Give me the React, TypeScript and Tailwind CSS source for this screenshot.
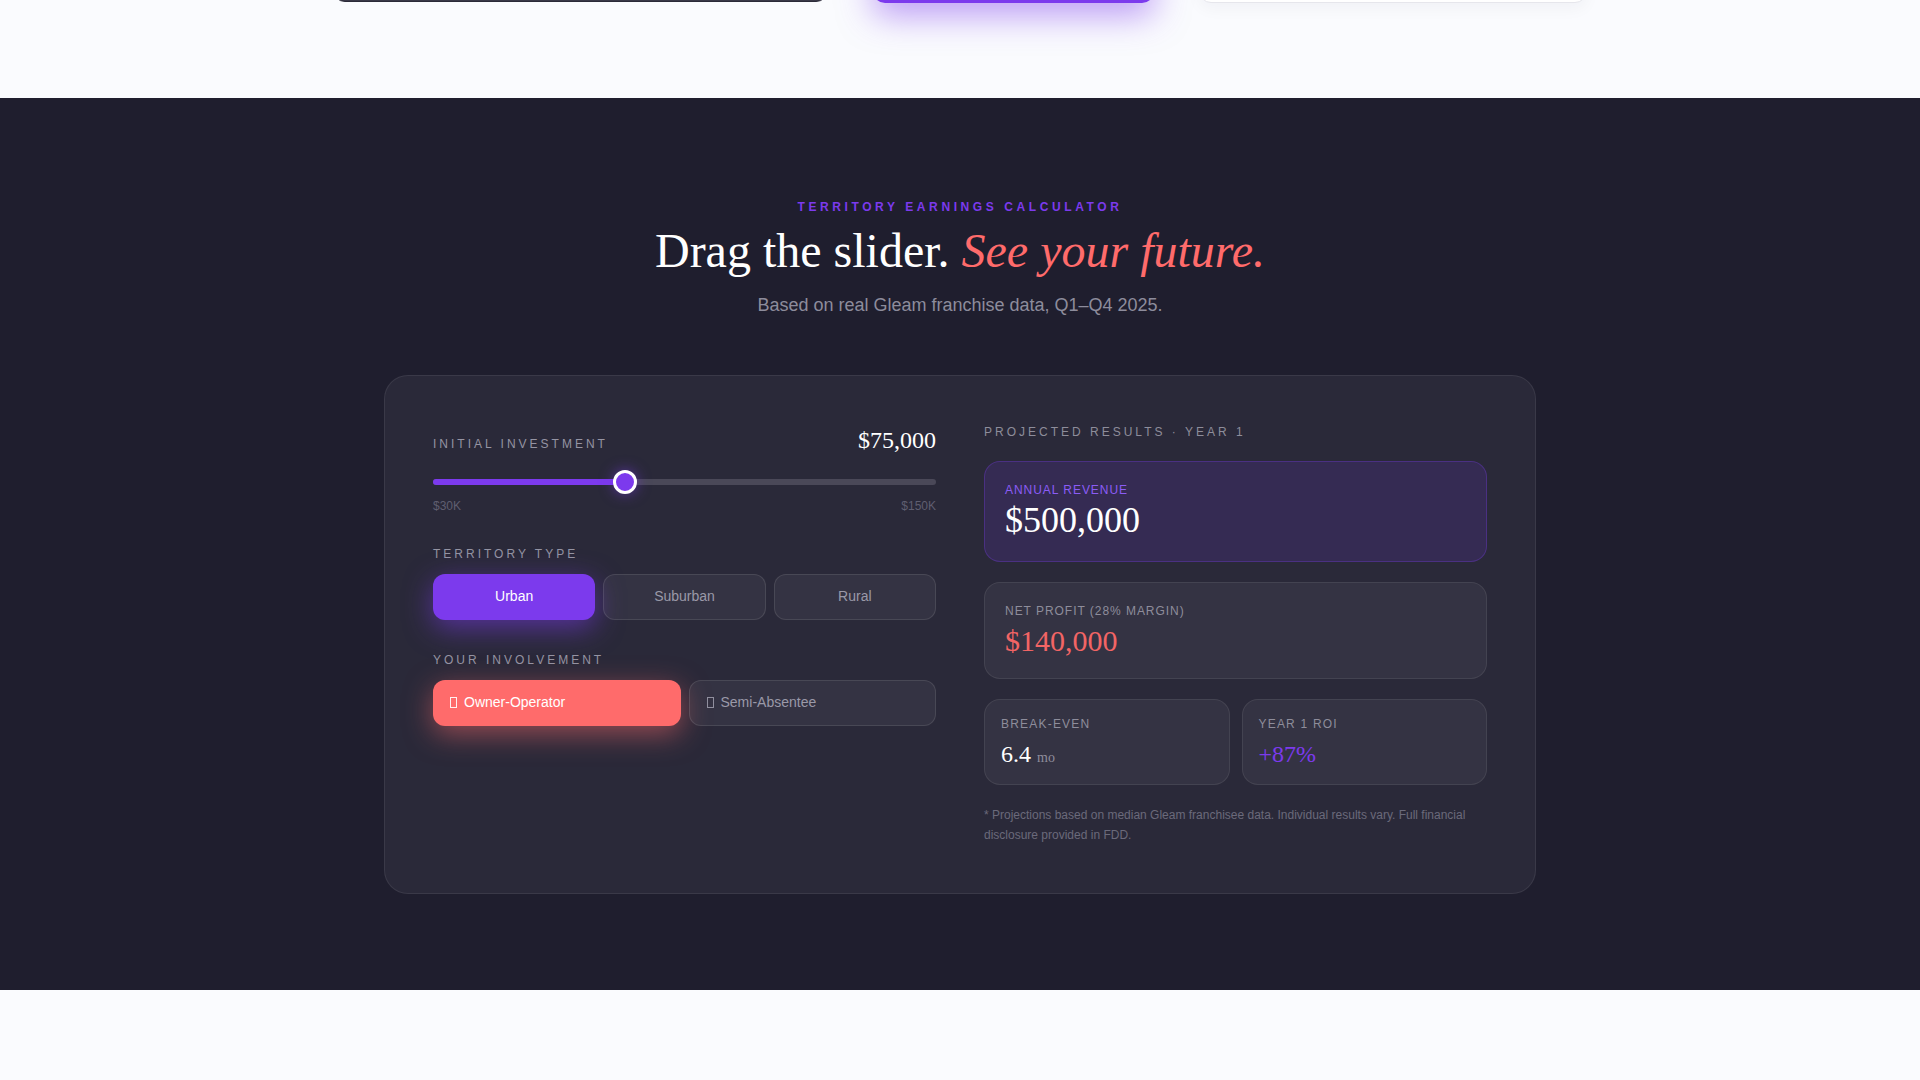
import { useState } from "react"

const territories = ["Urban", "Suburban", "Rural"]
const involvements = ["Owner-Operator", "Semi-Absentee"]

function Tofu() {
  return <span className="inline-block w-[7px] h-[11px] border border-current ml-[1px] mr-[7px] align-[-1px] opacity-90" />
}

export default function App() {
  const [investment] = useState(75000)
  const [territory, setTerritory] = useState("Urban")
  const [involvement, setInvolvement] = useState("Owner-Operator")

  const pct = ((investment - 30000) / (150000 - 30000)) * 100
  const thumbLeft = `calc(${pct}% - ${pct * 0.24}px)`
  const fillWidth = `calc(${pct}% - ${pct * 0.24}px + 12px)`

  return (
    <div className="min-h-screen bg-[#fafbfe] font-['Liberation_Sans',Arial,sans-serif]">
      {/* Tail of the previous section */}
      <section className="h-[98px] overflow-hidden">
        <div className="flex justify-center gap-[45px] -mt-[40px]">
          <div className="w-[495px] h-[42px] rounded-xl bg-[#3a3948] border border-[#2b2a38]" />
          <div className="w-[281px] h-[43px] rounded-xl bg-[#7c3aed] shadow-[0_12px_34px_rgba(124,58,237,0.5)]" />
          <div className="w-[388px] h-[43px] rounded-xl bg-white border border-[#e6e6ec] shadow-[0_6px_16px_rgba(20,20,40,0.04)]" />
        </div>
      </section>

      {/* Calculator */}
      <section className="bg-[#1f1e2e] pt-[101px] pb-24">
        <div className="text-center">
          <p className="text-[12px] leading-4 font-bold tracking-[0.3em] text-[#7c3aed]">
            TERRITORY EARNINGS CALCULATOR
          </p>
          <h2 className="mt-[10px] text-[48px] leading-[1.1] text-white font-['Liberation_Serif',Georgia,serif]">
            Drag the slider. <em className="text-[#ff6b6b]">See your future.</em>
          </h2>
          <p className="mt-[13px] text-[18px] leading-7 text-[#8d8c9c]">
            Based on real Gleam franchise data, Q1–Q4 2025.
          </p>
        </div>

        <div className="mt-14 mx-auto w-[1152px] rounded-[24px] bg-[#2a2939] border border-white/[0.08] p-12 grid grid-cols-2 gap-12">
          {/* Inputs */}
          <div>
            <div className="flex items-baseline justify-between">
              <span className="text-[12px] leading-4 tracking-[0.25em] text-[#9594a3]">INITIAL INVESTMENT</span>
              <span className="text-[24px] leading-8 text-white font-['Liberation_Serif',Georgia,serif]">
                ${investment.toLocaleString("en-US")}
              </span>
            </div>

            <div className="relative mt-[14px] h-6">
              <div className="absolute inset-x-0 top-[9px] h-1.5 rounded-full bg-[#4a4858]" />
              <div className="absolute left-0 top-[9px] h-1.5 rounded-full bg-[#7c3aed]" style={{ width: fillWidth }} />
              <div
                className="absolute top-0 w-6 h-6 rounded-full bg-[#7c3aed] border-[3px] border-white shadow-[0_0_14px_rgba(124,58,237,0.55)]"
                style={{ left: thumbLeft }}
              />
            </div>
            <div className="mt-1 flex justify-between text-[12px] leading-4 text-[#5f5e70]">
              <span>$30K</span>
              <span>$150K</span>
            </div>

            <p className="mt-8 text-[12px] leading-4 tracking-[0.25em] text-[#9594a3]">TERRITORY TYPE</p>
            <div className="mt-3 grid grid-cols-3 gap-2">
              {territories.map((t) => (
                <button
                  key={t}
                  onClick={() => setTerritory(t)}
                  className={
                    t === territory
                      ? "h-[46px] rounded-xl bg-[#7c3aed] text-white text-[14px] shadow-[0_8px_28px_rgba(124,58,237,0.55)]"
                      : "h-[46px] rounded-xl bg-white/[0.05] border border-white/10 text-[#9a99a8] text-[14px]"
                  }
                >
                  {t}
                </button>
              ))}
            </div>

            <p className="mt-8 text-[12px] leading-4 tracking-[0.25em] text-[#9594a3]">YOUR INVOLVEMENT</p>
            <div className="mt-3 grid grid-cols-2 gap-2">
              {involvements.map((v) => (
                <button
                  key={v}
                  onClick={() => setInvolvement(v)}
                  className={
                    v === involvement
                      ? "h-[46px] rounded-xl bg-[#ff6b6b] text-white text-[14px] text-left px-4 shadow-[0_8px_28px_rgba(255,107,107,0.5)]"
                      : "h-[46px] rounded-xl bg-white/[0.05] border border-white/10 text-[#9a99a8] text-[14px] text-left px-4"
                  }
                >
                  <Tofu />
                  {v}
                </button>
              ))}
            </div>
          </div>

          {/* Results */}
          <div>
            <p className="text-[12px] leading-4 tracking-[0.25em] text-[#8e8d9b]">PROJECTED RESULTS · YEAR 1</p>

            <div className="mt-[21px] flex flex-col gap-5">
              <div className="rounded-2xl bg-[#7c3aed]/15 border border-[#7c3aed]/30 px-5 py-5">
                <p className="text-[12px] leading-4 tracking-[0.08em] text-[#8b5cf6]">ANNUAL REVENUE</p>
                <p className="mt-0.5 text-[36px] leading-[41px] text-white font-['Liberation_Serif',Georgia,serif]">$500,000</p>
              </div>

              <div className="rounded-2xl bg-white/[0.05] border border-white/[0.08] px-5 py-5">
                <p className="text-[12px] leading-4 tracking-[0.08em] text-[#8e8d9b]">NET PROFIT (28% MARGIN)</p>
                <p className="mt-1 text-[30px] leading-[35px] text-[#f26565] font-['Liberation_Serif',Georgia,serif]">$140,000</p>
              </div>

              <div className="grid grid-cols-2 gap-3">
                <div className="rounded-2xl bg-white/[0.05] border border-white/[0.08] p-4">
                  <p className="text-[12px] leading-4 tracking-[0.1em] text-[#8e8d9b]">BREAK-EVEN</p>
                  <p className="mt-2 text-[24px] leading-7 text-white font-['Liberation_Serif',Georgia,serif]">
                    6.4 <span className="text-[14px] leading-none text-[#8e8d9b]">mo</span>
                  </p>
                </div>
                <div className="rounded-2xl bg-white/[0.05] border border-white/[0.08] p-4">
                  <p className="text-[12px] leading-4 tracking-[0.1em] text-[#8e8d9b]">YEAR 1 ROI</p>
                  <p className="mt-2 text-[24px] leading-7 text-[#7c3aed] font-['Liberation_Serif',Georgia,serif]">+87%</p>
                </div>
              </div>

              <p className="text-[12px] leading-5 text-[#6b6a7b]">
                * Projections based on median Gleam franchisee data. Individual results vary. Full financial disclosure provided in FDD.
              </p>
            </div>
          </div>
        </div>
      </section>

      <section className="h-[90px]" />
    </div>
  )
}
